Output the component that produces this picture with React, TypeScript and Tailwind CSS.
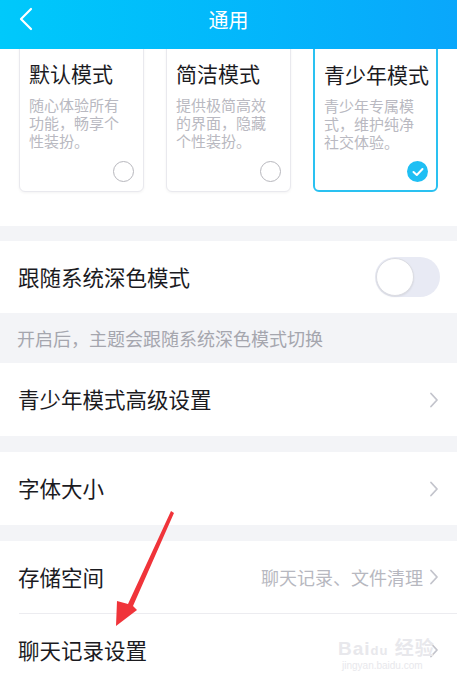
import { FC } from 'react';

const font = { fontFamily: '"Noto Sans CJK SC", "Noto Sans", sans-serif' };

const Chevron: FC = () => (
  <svg width="10" height="16" viewBox="0 0 10 16" className="shrink-0">
    <path d="M2 1.5 L8 8 L2 14.5" fill="none" stroke="#c3c4cc" strokeWidth="1.8" strokeLinecap="round" strokeLinejoin="round" />
  </svg>
);

type Mode = { title: string; desc: string[]; active?: boolean };

const modes: Mode[] = [
  { title: '默认模式', desc: ['随心体验所有', '功能，畅享个', '性装扮。'] },
  { title: '简洁模式', desc: ['提供极简高效', '的界面，隐藏', '个性装扮。'] },
  { title: '青少年模式', desc: ['青少年专属模', '式，维护纯净', '社交体验。'], active: true },
];

const ModeCard: FC<{ mode: Mode }> = ({ mode }) => (
  <div
    className={`relative w-[125px] h-[160px] rounded-[6px] bg-white pl-[9px] pt-[26px] ${
      mode.active ? 'border-2 border-[#2ac1f1]' : 'border border-[#e9e9ee] shadow-[0_1px_3px_rgba(0,0,0,0.05)]'
    }`}
  >
    <div className="text-[21px] leading-[28px] text-[#1b1b1f]">{mode.title}</div>
    <div className="mt-[9px] text-[15px] leading-[18px] text-[#b9b9c1]">
      {mode.desc.map((d) => (
        <div key={d}>{d}</div>
      ))}
    </div>
    {mode.active ? (
      <div className="absolute right-[8px] bottom-[8px] w-[21px] h-[21px] rounded-full bg-[#1fbff4] flex items-center justify-center">
        <svg width="12" height="10" viewBox="0 0 12 10">
          <path d="M1.5 5 L4.8 8 L10.5 2" fill="none" stroke="white" strokeWidth="2" strokeLinecap="round" strokeLinejoin="round" />
        </svg>
      </div>
    ) : (
      <div className="absolute right-[9px] bottom-[9px] w-[21px] h-[21px] rounded-full border-[1.5px] border-[#b7b7bd]" />
    )}
  </div>
);

const Row: FC<{ label: string; right?: string; height?: string; children?: React.ReactNode }> = ({
  label,
  right,
  height = 'h-[73px]',
  children,
}) => (
  <div className={`${height} bg-white flex items-center justify-between pl-[18px] pr-[18px]`}>
    <span className="text-[21.5px] text-[#1b1b1f]">{label}</span>
    <div className="flex items-center gap-[6px]">
      {right && <span className="text-[18px] text-[#b7b8c0]">{right}</span>}
      {children ?? <Chevron />}
    </div>
  </div>
);

const App: FC = () => {
  return (
    <div className="relative w-[457px] h-[685px] overflow-hidden bg-[#f3f4f7]" style={font}>
      <div className="h-[49px] bg-gradient-to-r from-[#00c9fb] to-[#0aa7fb] relative z-10 flex items-center justify-center">
        <svg width="14" height="24" viewBox="0 0 14 24" className="absolute left-[19px] top-[7px]">
          <path d="M12 2 L2 12 L12 22" fill="none" stroke="white" strokeWidth="2.2" strokeLinecap="round" strokeLinejoin="round" />
        </svg>
        <span className="text-[20px] text-white -mt-[9px]">通用</span>
      </div>

      <div className="h-[177px] bg-white overflow-hidden">
        <div className="flex gap-[22px] pl-[19px] -mt-[17px]">
          {modes.map((m) => (
            <ModeCard key={m.title} mode={m} />
          ))}
        </div>
      </div>

      <div className="h-[15px]" />

      <div className="h-[72px] bg-white flex items-center justify-between pl-[18px] pr-[17px]">
        <span className="text-[21.5px] text-[#1b1b1f]">跟随系统深色模式</span>
        <div className="w-[65px] h-[40px] rounded-full bg-[#e8eaf4] relative">
          <div className="absolute left-[1px] top-[1px] w-[38px] h-[38px] rounded-full bg-white border border-[#dcdde3] shadow-[0_1px_2px_rgba(0,0,0,0.08)]" />
        </div>
      </div>

      <div className="h-[50px] flex items-center pl-[17px] text-[18px] text-[#a5a6ae]">
        开启后，主题会跟随系统深色模式切换
      </div>

      <Row label="青少年模式高级设置" />
      <div className="h-[16px]" />
      <Row label="字体大小" />
      <div className="h-[16px]" />
      <Row label="存储空间" right="聊天记录、文件清理" height="h-[72px]" />
      <div className="bg-white pl-[19px]">
        <div className="h-px bg-[#ececf0]" />
      </div>
      <div className="h-[72px] bg-white flex items-center justify-between pl-[18px] pr-[18px]">
        <span className="text-[21.5px] text-[#1b1b1f]">聊天记录设置</span>
        <Chevron />
      </div>

      <div className="absolute left-[338px] top-[639px] flex flex-col items-start leading-none text-[#e8e8ec] pointer-events-none">
        <span className="text-[19px] font-bold tracking-[1px]" style={{ fontFamily: '"Liberation Sans", "Noto Sans CJK SC", sans-serif' }}>
          Bai<span className="text-[13px]">du</span> 经验
        </span>
        <span className="text-[10px] mt-[3px] ml-[4px]" style={{ fontFamily: '"Liberation Sans", sans-serif' }}>
          jingyan.baidu.com
        </span>
      </div>

      <svg width="457" height="685" viewBox="0 0 457 685" className="absolute left-0 top-0 pointer-events-none">
        <polygon points="171,511 174,513 133,606 137,610 116,626 117,601 128,604" fill="#f0343a" />
      </svg>
    </div>
  );
};

export default App;
